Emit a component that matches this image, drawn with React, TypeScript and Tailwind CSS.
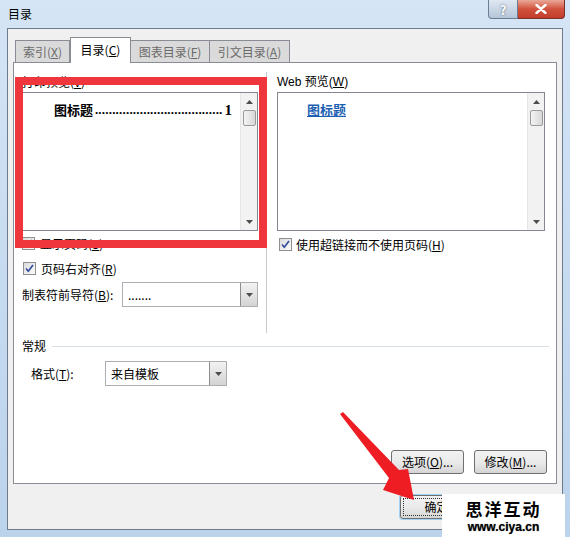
import React from "react";

function Checkbox({ checked }: { checked?: boolean }) {
  return (
    <span className="flex h-[13px] w-[13px] shrink-0 items-center justify-center border border-[#8f8f8f] bg-gradient-to-br from-[#dcdcdc] to-[#fbfbfb]">
      {checked && (
        <svg width="9" height="9" viewBox="0 0 9 9">
          <path d="M1 4.5 L3.3 7.2 L8 1" fill="none" stroke="#2b4a9a" strokeWidth="1.6" />
        </svg>
      )}
    </span>
  );
}

function Arrow({ up }: { up?: boolean }) {
  return (
    <svg width="7" height="4" viewBox="0 0 7 4">
      <path d={up ? "M0 4 L3.5 0 L7 4 Z" : "M0 0 L3.5 4 L7 0 Z"} fill="#4d4d4d" />
    </svg>
  );
}

function ScrollBar() {
  return (
    <div className="flex w-[17px] flex-col items-center bg-[#f2f2f2] border-l border-[#e6e6e6]">
      <div className="flex h-[17px] items-center justify-center">
        <Arrow up />
      </div>
      <div className="h-[16px] w-[13px] rounded-[2px] border border-[#9a9a9a] bg-gradient-to-r from-[#f3f3f3] to-[#d8d8d8]" />
      <div className="flex-1" />
      <div className="flex h-[17px] items-center justify-center">
        <Arrow />
      </div>
    </div>
  );
}

function Select({ value, width }: { value: string; width: string }) {
  return (
    <div className={`flex h-[25px] ${width} border border-[#abadb3] bg-white`}>
      <div className="flex flex-1 items-center pl-[5px] text-[12px] text-black">{value}</div>
      <div className="flex w-[17px] items-center justify-center border-l border-[#8d8d8d] bg-gradient-to-b from-[#f2f2f2] to-[#d4d4d4]">
        <Arrow />
      </div>
    </div>
  );
}

function Btn({ label, className = "" }: { label?: React.ReactNode; className?: string }) {
  return (
    <div
      className={`flex h-[24px] w-[73px] items-center justify-center rounded-[3px] border border-[#707070] bg-gradient-to-b from-[#f2f2f2] via-[#ebebeb] to-[#d5d5d5] text-[12px] text-black ${className}`}
    >
      {label}
    </div>
  );
}

const u = (c: string) => <span className="underline">{c}</span>;

export default function App() {
  return (
    <div className="relative flex h-[537px] w-[570px] flex-col overflow-hidden bg-gradient-to-b from-[#d5e5f6] via-[#c7dbf0] to-[#bcd3ec] font-['Noto_Sans_CJK_SC',sans-serif] text-black">
      {/* title bar */}
      <div className="flex h-[28px] shrink-0 items-start">
        <div className="pl-[8px] pt-[7px] text-[12px] leading-[14px]">目录</div>
        <div className="ml-auto mr-[5px] flex">
          <div className="flex h-[19px] w-[30px] items-center justify-center rounded-bl-[4px] border border-t-0 border-[#6b7d93] bg-gradient-to-b from-[#dfe8f2] to-[#b5c5d8] text-[13px] font-bold leading-none text-white [text-shadow:0_0_2px_#4a5566]">
            ?
          </div>
          <div className="flex h-[19px] w-[47px] items-center justify-center rounded-br-[4px] border border-l-0 border-t-0 border-[#7a2f2a] bg-gradient-to-b from-[#e9a797] via-[#d0513d] to-[#c23d2a]">
            <svg width="12" height="10" viewBox="0 0 12 10">
              <path d="M1.5 1 L10.5 9 M10.5 1 L1.5 9" stroke="#fff" strokeWidth="2.4" strokeLinecap="round" />
            </svg>
          </div>
        </div>
      </div>

      {/* client area */}
      <div className="mx-[7px] mb-[7px] flex flex-1 flex-col border border-[#6d7b8d] bg-[#f0f0f0] px-[5px] pt-[8px]">
        {/* tabs */}
        <div className="flex h-[25px] items-end pl-[2px] text-[12px]">
          <div className="flex h-[22px] w-[55px] items-center justify-center border border-b-0 border-[#898c95] bg-[#dadada] text-[#6a6a6a]">
            索引({u("X")})
          </div>
          <div className="relative z-10 -mb-px flex h-[26px] w-[61px] items-center justify-center border border-b-0 border-[#898c95] bg-white pb-[2px]">
            目录({u("C")})
          </div>
          <div className="flex h-[22px] w-[79px] items-center justify-center border border-b-0 border-l-0 border-[#898c95] bg-[#dadada] text-[#6a6a6a]">
            图表目录({u("F")})
          </div>
          <div className="flex h-[22px] w-[80px] items-center justify-center border border-b-0 border-l-0 border-[#898c95] bg-[#dadada] text-[#6a6a6a]">
            引文目录({u("A")})
          </div>
        </div>

        {/* tab panel */}
        <div className="flex h-[422px] flex-col border border-[#898c95] bg-white text-[12px]">
          <div className="flex">
            {/* left column */}
            <div className="mt-[9px] flex h-[261px] w-[253px] flex-col border-r border-[#c9c9c9] pl-[8px]">
              <div className="h-[20px] leading-[16px] pt-[2px]">打印预览({u("V")})</div>
              <div className="flex h-[139px] w-[236px] border border-[#828790]">
                <div className="flex flex-1 items-start justify-between pl-[31px] pr-[8px] pt-[9px] font-['Liberation_Serif','Noto_Sans_CJK_SC',serif] text-[13px] font-bold leading-[16px]">
                  <span className="font-['Noto_Sans_CJK_SC',serif]">图标题</span>
                  <span className="whitespace-nowrap tracking-[0.2px]">.....................................</span>
                  <span className="text-[15px]">1</span>
                </div>
                <ScrollBar />
              </div>
              <div className="mt-[6px] flex h-[13px] items-center gap-[5px]">
                <Checkbox checked />
                <span>显示页码({u("S")})</span>
              </div>
              <div className="mt-[12px] flex h-[13px] items-center gap-[5px] pl-px">
                <Checkbox checked />
                <span>页码右对齐({u("R")})</span>
              </div>
              <div className="mt-[7px] flex items-center">
                <span className="w-[100px]">制表符前导符({u("B")}):</span>
                <Select value="......." width="w-[136px]" />
              </div>
            </div>
            {/* right column */}
            <div className="mt-[9px] flex flex-col pl-[10px]">
              <div className="h-[20px] leading-[16px] pt-[2px] font-['Liberation_Sans','Noto_Sans_CJK_SC',sans-serif]">
                Web 预览({u("W")})
              </div>
              <div className="flex h-[139px] w-[268px] border border-[#828790]">
                <div className="flex-1 pl-[29px] pt-[9px] text-[13px] font-bold leading-[16px] text-[#1d5fb3]">
                  <span className="underline">图标题</span>
                </div>
                <ScrollBar />
              </div>
              <div className="mt-[7px] flex h-[13px] items-center gap-[4px] pl-[2px]">
                <Checkbox checked />
                <span>使用超链接而不使用页码({u("H")})</span>
              </div>
            </div>
          </div>

          {/* general */}
          <div className="mt-[4px] flex items-center pl-[8px] pr-[7px]">
            <span>常规</span>
            <div className="ml-[6px] h-px flex-1 bg-[#d5dfe5]" />
          </div>
          <div className="mt-[6px] flex items-center pl-[17px]">
            <span className="w-[74px]">格式({u("T")}):</span>
            <Select value="来自模板" width="w-[122px]" />
          </div>

          <div className="mt-auto mb-[9px] flex justify-end gap-[10px] pr-[9px]">
            <Btn label={<>选项({u("O")})...</>} />
            <Btn label={<>修改({u("M")})...</>} />
          </div>
        </div>

        {/* bottom buttons (cancel sits under the watermark) */}
        <div className="flex justify-end gap-[9px] pr-[2px] pt-[11px]">
          <Btn
            label="确定"
            className="border-[#3c7fb1] shadow-[0_0_0_1px_#9fd3f4] outline-dotted outline-1 -outline-offset-4 outline-[#333]"
          />
          <Btn />
        </div>
      </div>

      {/* red highlight box */}
      <div className="pointer-events-none absolute left-[15px] top-[77px] h-[171px] w-[252px] border-[8px] border-[#ef363c]" />

      {/* red arrow */}
      <svg className="pointer-events-none absolute left-0 top-0" width="570" height="537" viewBox="0 0 570 537">
        <path
          d="M340 414 L343 412 L399 470 L408 469 L414 500 L383 490 L389 478 Z"
          fill="#ee1d23"
        />
      </svg>

      {/* watermark */}
      <div className="absolute left-[442px] top-[494px] flex h-[43px] w-[123px] flex-col items-center bg-white pt-[3px]">
        <span className="block h-[23px] text-[17px] font-bold leading-[23px] tracking-[2px] text-black">思洋互动</span>
        <span className="block h-[14px] font-['Liberation_Sans',sans-serif] text-[12px] font-bold leading-[14px] text-black [text-shadow:0_0_1px_#666]">
          www.ciya.cn
        </span>
      </div>
    </div>
  );
}
